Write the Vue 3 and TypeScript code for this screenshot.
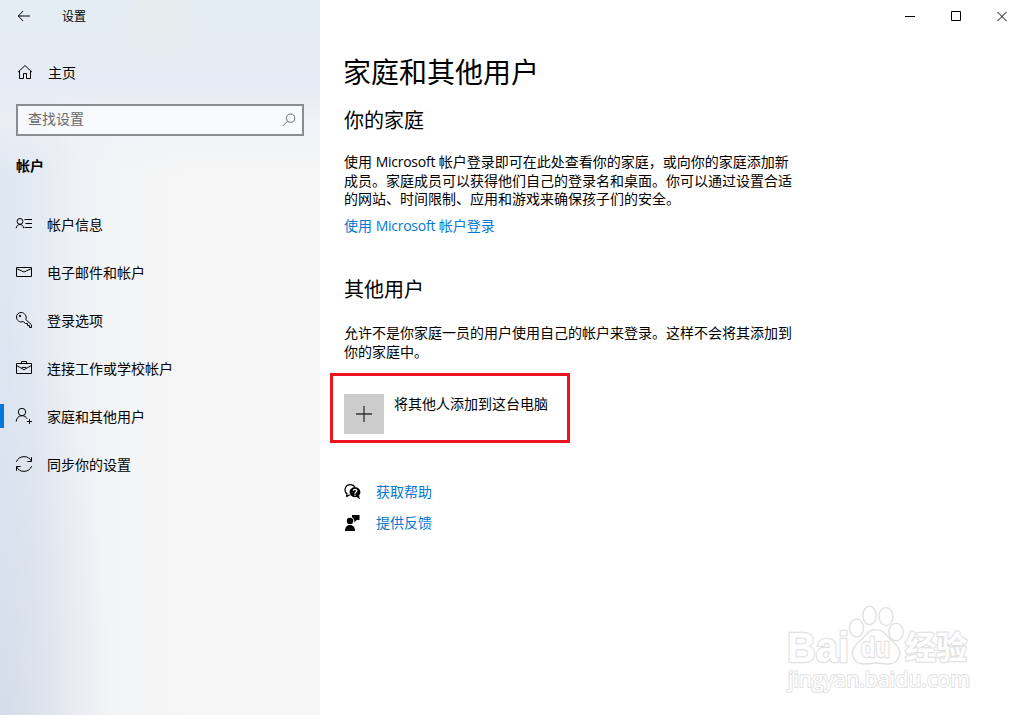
<script setup lang="ts">
import { ref } from 'vue'

interface NavItem {
  id: string
  label: string
}

const navItems: NavItem[] = [
  { id: 'info', label: '帐户信息' },
  { id: 'mail', label: '电子邮件和帐户' },
  { id: 'key', label: '登录选项' },
  { id: 'work', label: '连接工作或学校帐户' },
  { id: 'family', label: '家庭和其他用户' },
  { id: 'sync', label: '同步你的设置' },
]

const active = ref('family')
const searchQuery = ref('')
</script>

<template>
  <div class="window">
    <aside class="sidebar">
      <div class="titlebar">
        <svg class="back" width="14" height="12" viewBox="0 0 14 12">
          <path d="M13 6H1.2M6.2 1L1.2 6L6.2 11" />
        </svg>
        <span>设置</span>
      </div>

      <div class="home">
        <svg width="16" height="16" viewBox="0 0 16 16">
          <path d="M1 8.2L8 1.5L15 8.2M2.5 7V14.5H6.5V9.5H9.5V14.5H13.5V7" />
        </svg>
        <span>主页</span>
      </div>

      <div class="search">
        <input v-model="searchQuery" type="text" placeholder="查找设置">
        <svg width="14" height="14" viewBox="0 0 14 14">
          <circle cx="8.6" cy="5.2" r="4.1" />
          <path d="M5.6 8.2L0.8 13" />
        </svg>
      </div>

      <h3>帐户</h3>

      <ul>
        <li v-for="item in navItems" :key="item.id" :class="{ active: active === item.id }" @click="active = item.id">
          <svg width="18" height="18" viewBox="0 0 18 18">
            <template v-if="item.id === 'info'">
              <circle cx="5" cy="6.4" r="2.9" />
              <path d="M1.2 13.2C1.4 11 3 9.5 5 9.5S8.4 11 8.6 13.2M9.5 4.5H17M10.5 8.5H17M9.5 12.5H17" />
            </template>
            <template v-else-if="item.id === 'mail'">
              <path d="M1.5 4.5H16.5V13.5H1.5ZM1.5 5.5L9 9L16.5 5.5" />
            </template>
            <template v-else-if="item.id === 'key'">
              <path d="M10.8 8.6L16.5 13.8V16.5H14.5V14.5H12.5V12.5H10.5L8.2 10.5C4.8 12 1.5 9.4 1.5 6C1.5 3.4 3.6 1.5 6.1 1.5C9.6 1.5 12.2 5.1 10.8 8.6Z" />
              <circle cx="5" cy="5" r=".7" class="solid" />
            </template>
            <template v-else-if="item.id === 'work'">
              <path d="M1.5 4.5H16.5V14.5H1.5ZM6.5 4.5V2.5H11.5V4.5M1.5 6.5L7 9.5M11 9.5L16.5 6.5M7.2 8.5H10.8V9.6L9.8 10.5H8.2L7.2 9.6Z" />
            </template>
            <template v-else-if="item.id === 'family'">
              <circle cx="7" cy="5" r="3.7" />
              <path d="M1.2 14.6C1.4 11 3.8 8.7 7 8.7C9.3 8.7 11.2 9.9 12.1 11.8M14.5 12V17M12 14.5H17" />
            </template>
            <template v-else>
              <path d="M1.4 6.8C2.4 3.8 5.4 1.6 9 1.6C12.4 1.6 15.3 3.4 16.5 6.4M16.5 2.2V6.5H12.4M16.6 11.2C15.6 14.2 12.6 16.4 9 16.4C5.6 16.4 2.7 14.6 1.5 11.6M1.5 15.8V11.5H5.6" />
            </template>
          </svg>
          <span>{{ item.label }}</span>
        </li>
      </ul>
    </aside>

    <main class="content">
      <div class="controls">
        <svg width="10" height="11" viewBox="0 0 10 11"><path d="M0 5.5H10" /></svg>
        <svg width="10" height="11" viewBox="0 0 10 11"><path d="M.5 .5H9.5V9.5H.5Z" /></svg>
        <svg width="10" height="11" viewBox="0 0 10 11"><path d="M.3 .8L9.7 10.2M9.7 .8L.3 10.2" /></svg>
      </div>

      <h1>家庭和其他用户</h1>

      <section class="family">
        <h2>你的家庭</h2>
        <p>
          使用 <span class="latin">Microsoft</span> 帐户登录即可在此处查看你的家庭，或向你的家庭添加新<br>
          成员。家庭成员可以获得他们自己的登录名和桌面。你可以通过设置合适<br>
          的网站、时间限制、应用和游戏来确保孩子们的安全。
        </p>
        <a href="#">使用 <span class="latin">Microsoft</span> 帐户登录</a>
      </section>

      <section class="others">
        <h2>其他用户</h2>
        <p>
          允许不是你家庭一员的用户使用自己的帐户来登录。这样不会将其添加到<br>
          你的家庭中。
        </p>
      </section>

      <div class="add-box">
        <button>
          <svg width="18" height="18" viewBox="0 0 18 18"><path d="M9 1V17M1 9H17" /></svg>
        </button>
        <span>将其他人添加到这台电脑</span>
      </div>

      <div class="help">
        <div class="help-row">
          <svg width="18" height="18" viewBox="0 0 18 18">
            <path class="line" d="M2.4 13.6L3 10.8C1.3 9.6 .7 7.6 1.2 5.6C1.9 3 4.2 1.6 6.7 1.7C8.6 1.8 10.3 2.8 11.1 4.4M2.4 13.6L5.6 11.9" />
            <path d="M11 4.2C14.1 4.2 16.4 6.3 16.4 9.1C16.4 10.5 15.9 11.7 15 12.6L16 16.2L12.6 14.1C12 14.2 11.5 14.2 11 14.2C7.9 14.2 5.6 12 5.6 9.1C5.6 6.3 7.9 4.2 11 4.2Z" />
            <path class="mark" d="M9.3 7.8C9.3 5.8 12.8 5.8 12.8 7.8C12.8 9.1 11 9 11 10.7M11 11.6V12.8" />
          </svg>
          <a href="#">获取帮助</a>
        </div>
        <div class="help-row">
          <svg width="18" height="18" viewBox="0 0 18 18">
            <circle cx="6" cy="6.9" r="3.2" />
            <path d="M1 17C1 13.2 2.8 11 6 11S11 13.2 11 17ZM8 1H15.5V6H12.8L10.2 8.2V6H9.9C9.6 4.6 9 3.8 8 3.2Z" />
          </svg>
          <a href="#">提供反馈</a>
        </div>
      </div>
    </main>

    <svg class="watermark" width="200" height="100" viewBox="0 0 200 100">
      <text x="6" y="67" class="brand" textLength="62" lengthAdjust="spacingAndGlyphs">Bai</text>
      <ellipse cx="75.5" cy="33" rx="7" ry="9" />
      <ellipse cx="88.5" cy="20.5" rx="6.7" ry="9.2" />
      <ellipse cx="105" cy="21.5" rx="7" ry="9" />
      <ellipse cx="115" cy="37" rx="7.2" ry="8.8" />
      <path d="M95 34.5C102 34.5 106 41 111 46C117 51 121 56 117.500 63C114 70 107 69.500 95 68C83 69.500 76 70 72.500 63C69 56 74 50 80 45C85 40 88 34.500 95 34.500Z" />
      <text x="80" y="62" class="du" textLength="29" lengthAdjust="spacingAndGlyphs">du</text>
      <text x="124" y="64" class="cn" textLength="62" lengthAdjust="spacingAndGlyphs">经验</text>
      <text x="7" y="92" class="domain" textLength="182" lengthAdjust="spacingAndGlyphs">jingyan.baidu.com</text>
    </svg>
  </div>
</template>

<style>
  body {
    margin: 0;
    overflow: hidden;
  }
</style>

<style scoped>
  .window {
    position: relative;
    display: flex;
    width: 1025px;
    height: 715px;
    overflow: hidden;
    background: #fff;
    color: #000;
    font-family: "Open Sans", "Noto Sans CJK SC", sans-serif;
    font-size: 14px;
    white-space: nowrap;
  }

  .sidebar {
    width: 320px;
    height: 715px;
    flex: none;
    background:
      radial-gradient(ellipse 45px 50px at 160px 15px, rgba(231, 237, 229, .7), rgba(231, 237, 229, 0)),
      linear-gradient(180deg, #e4ecf4 0, #e6ecf5 85px, rgba(238, 241, 246, .7) 125px, rgba(246, 246, 246, 0) 175px),
      radial-gradient(ellipse 110px 420px at 0 715px, rgba(204, 211, 224, .5), rgba(204, 211, 224, 0)),
      linear-gradient(90deg, #dee7f2 0, #e3eaf3 35px, #eef1f5 75px, #f4f5f6 125px, #f6f6f6 200px);
  }

  .titlebar {
    display: flex;
    align-items: center;
    height: 32px;
    padding-left: 17px;
    font-size: 12px;
  }

  .titlebar span {
    margin-left: 31px;
  }

  svg {
    flex: none;
    fill: none;
    stroke: #000;
    stroke-width: 1;
  }

  .home {
    display: flex;
    align-items: center;
    height: 40px;
    margin-top: 20px;
    padding-left: 17px;
  }

  .home span {
    margin-left: 15px;
  }

  .search {
    display: flex;
    align-items: center;
    box-sizing: border-box;
    width: 288px;
    height: 32px;
    margin: 12px 16px 0;
    padding: 0 6px 0 10px;
    border: 2px solid #8b8e91;
    background: rgba(255, 255, 255, .6);
  }

  .search input {
    flex: 1;
    min-width: 0;
    height: 24px;
    padding: 0 0 3px;
    border: none;
    outline: none;
    background: transparent;
    font: inherit;
  }

  .search input::placeholder {
    color: #666a6e;
  }

  .search svg {
    stroke: #666a6e;
  }

  h3 {
    margin: 20px 0 0 16px;
    font-size: 14px;
    font-weight: 700;
    line-height: 20px;
  }

  ul {
    margin: 24px 0 0;
    padding: 0;
    list-style: none;
  }

  li {
    display: flex;
    align-items: center;
    box-sizing: border-box;
    height: 48px;
    padding-left: 15px;
    cursor: pointer;
  }

  li span {
    margin-left: 14px;
  }

  li.active {
    background: linear-gradient(#0078d7, #0078d7) 0 50% / 4px 24px no-repeat;
  }

  .solid {
    fill: #000;
  }

  .content {
    flex: 1;
    padding-left: 24px;
  }

  .controls {
    display: flex;
    justify-content: flex-end;
    align-items: center;
    gap: 36px;
    height: 33px;
    padding-right: 18px;
  }

  h1 {
    margin: 19px 0 0 -1px;
    font-size: 28px;
    font-weight: 400;
    line-height: 40px;
  }

  h2 {
    margin: 0;
    font-size: 20px;
    font-weight: 400;
    line-height: 28px;
  }

  p {
    margin: 0;
    line-height: 18.5px;
  }

  a {
    color: #0078d7;
    text-decoration: none;
  }

  .latin {
    letter-spacing: -.25px;
  }

  .family {
    height: 169px;
    padding-top: 15px;
  }

  .family p {
    margin-top: 18px;
  }

  .family a {
    display: block;
    margin-top: 7px;
    line-height: 20px;
  }

  .others {
    height: 97px;
  }

  .others p {
    margin-top: 20px;
  }

  .add-box {
    display: flex;
    box-sizing: border-box;
    width: 240px;
    height: 70px;
    margin-left: -14px;
    padding: 18px 0 0 11px;
    border: 3px solid #ec141f;
  }

  .add-box button {
    display: flex;
    align-items: center;
    justify-content: center;
    width: 40px;
    height: 40px;
    padding: 0;
    border: none;
    background: #ccc;
  }

  .add-box button svg {
    stroke: #333;
    stroke-width: 1.3;
  }

  .add-box span {
    margin-left: 10px;
    line-height: 20px;
  }

  .help {
    margin-top: 33px;
  }

  .help-row {
    display: flex;
    align-items: center;
    height: 31px;
  }

  .help-row svg {
    fill: #000;
    stroke: none;
  }

  .help-row .line {
    fill: none;
    stroke: #000;
    stroke-width: 1.2;
  }

  .help-row .mark {
    fill: none;
    stroke: #fff;
    stroke-width: 1.3;
  }

  .help-row a {
    margin-left: 14px;
    padding-bottom: 2px;
  }

  /* logo lies over the bottom right corner of the window */
  .watermark {
    position: absolute;
    left: 781px;
    top: 595px;
    fill: #fff;
    stroke: #e2e2e2;
    stroke-width: 1.5;
  }

  .watermark text {
    font-family: "Liberation Sans", "Noto Sans CJK SC", sans-serif;
    line-height: 1;
    paint-order: stroke;
    stroke-width: 2.5;
    stroke-linejoin: round;
  }

  .brand {
    font-size: 42px;
    font-weight: 700;
  }

  .du {
    font-size: 27px;
    font-weight: 700;
  }

  .cn {
    font-size: 32px;
    font-weight: 700;
  }

  .watermark .domain {
    font-family: "Open Sans", sans-serif;
    font-size: 21px;
    font-weight: 400;
    stroke-width: 2;
  }
</style>
